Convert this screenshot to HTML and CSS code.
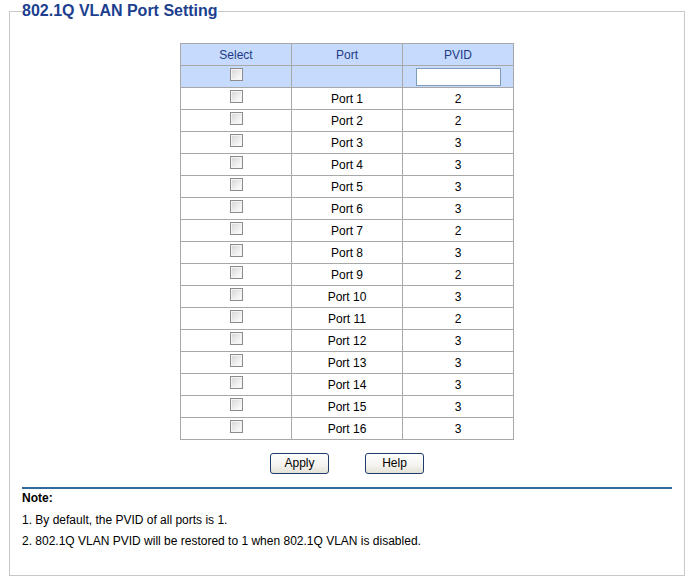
FILE: index.html
```html
<!DOCTYPE html>
<html>
<head>
<meta charset="utf-8">
<link rel="stylesheet" href="styles.css">
</head>
<body>
<div class="page">
  <fieldset class="panel">
    <legend class="panel-title">802.1Q VLAN Port Setting</legend>
    <table class="ports">
      <tr class="head">
        <th>Select</th><th>Port</th><th>PVID</th>
      </tr>
      <tr class="head">
        <td><span class="cb"></span></td><td></td><td><span class="field"></span></td>
      </tr>
      <tr><td><span class="cb"></span></td><td>Port 1</td><td>2</td></tr>
      <tr><td><span class="cb"></span></td><td>Port 2</td><td>2</td></tr>
      <tr><td><span class="cb"></span></td><td>Port 3</td><td>3</td></tr>
      <tr><td><span class="cb"></span></td><td>Port 4</td><td>3</td></tr>
      <tr><td><span class="cb"></span></td><td>Port 5</td><td>3</td></tr>
      <tr><td><span class="cb"></span></td><td>Port 6</td><td>3</td></tr>
      <tr><td><span class="cb"></span></td><td>Port 7</td><td>2</td></tr>
      <tr><td><span class="cb"></span></td><td>Port 8</td><td>3</td></tr>
      <tr><td><span class="cb"></span></td><td>Port 9</td><td>2</td></tr>
      <tr><td><span class="cb"></span></td><td>Port 10</td><td>3</td></tr>
      <tr><td><span class="cb"></span></td><td>Port 11</td><td>2</td></tr>
      <tr><td><span class="cb"></span></td><td>Port 12</td><td>3</td></tr>
      <tr><td><span class="cb"></span></td><td>Port 13</td><td>3</td></tr>
      <tr><td><span class="cb"></span></td><td>Port 14</td><td>3</td></tr>
      <tr><td><span class="cb"></span></td><td>Port 15</td><td>3</td></tr>
      <tr><td><span class="cb"></span></td><td>Port 16</td><td>3</td></tr>
    </table>
    <div class="actions">
      <button class="btn">Apply</button>
      <button class="btn">Help</button>
    </div>
    <div class="rule"></div>
    <div class="note">
      <div class="note-title">Note:</div>
      <p class="note-line first">1. By default, the PVID of all ports is 1.</p>
      <p class="note-line">2. 802.1Q VLAN PVID will be restored to 1 when 802.1Q VLAN is disabled.</p>
    </div>
  </fieldset>
</div>
</body>
</html>
```

FILE: styles.css
```css
html, body {
  margin: 0;
  padding: 0;
  background: #ffffff;
}
body {
  font-family: "Liberation Sans", Arial, sans-serif;
  font-size: 12px;
  color: #000000;
}
.page {
  padding: 2px 0 0 9px;
  width: 676px;
}
.panel {
  margin: 0;
  border: 1px solid #c8c8c8;
  padding: 0 12px 23px 12px;
  min-width: 0;
}
.panel-title {
  padding: 0;
  font-size: 16px;
  font-weight: bold;
  color: #1c3f8f;
  line-height: 18px;
}
.ports {
  border-collapse: collapse;
  margin: 23px auto 0 auto;
}
.ports th, .ports td {
  border: 1px solid #a8a8a8;
  width: 110px;
  height: 21px;
  padding: 0;
  text-align: center;
  vertical-align: middle;
  font-weight: normal;
  line-height: 14px;
}
.ports tr.head th, .ports tr.head td {
  background: #c6dafd;
}
.ports th {
  color: #1d3a86;
}
.cb {
  display: inline-block;
  width: 11px;
  height: 11px;
  border: 1px solid #8c8c8c;
  background: linear-gradient(135deg, #d4d4d4 0%, #f0f0f0 60%, #ffffff 100%);
  box-shadow: inset 0 0 0 1px #f4f4f4;
  vertical-align: top;
  margin-top: -2px;
}
.field {
  display: inline-block;
  width: 83px;
  height: 16px;
  border: 1px solid #7f9db9;
  background: #ffffff;
  vertical-align: middle;
}
.actions {
  display: flex;
  justify-content: center;
  gap: 36px;
  margin-top: 13px;
}
.btn {
  width: 59px;
  height: 21px;
  padding: 0;
  border: 1px solid #1f3d6b;
  border-radius: 3px;
  background: linear-gradient(to bottom, #ffffff 0%, #f4f3ee 60%, #e3e1d7 100%);
  font-family: "Liberation Sans", Arial, sans-serif;
  font-size: 12px;
  color: #000000;
  line-height: 19px;
}
.rule {
  height: 2px;
  background: #336a9c;
  margin-top: 13px;
}
.note-title {
  font-weight: bold;
  line-height: 18px;
}
.note-line {
  margin: 0;
  line-height: 21px;
}
.note-line.first {
  margin-top: 3px;
}
```
